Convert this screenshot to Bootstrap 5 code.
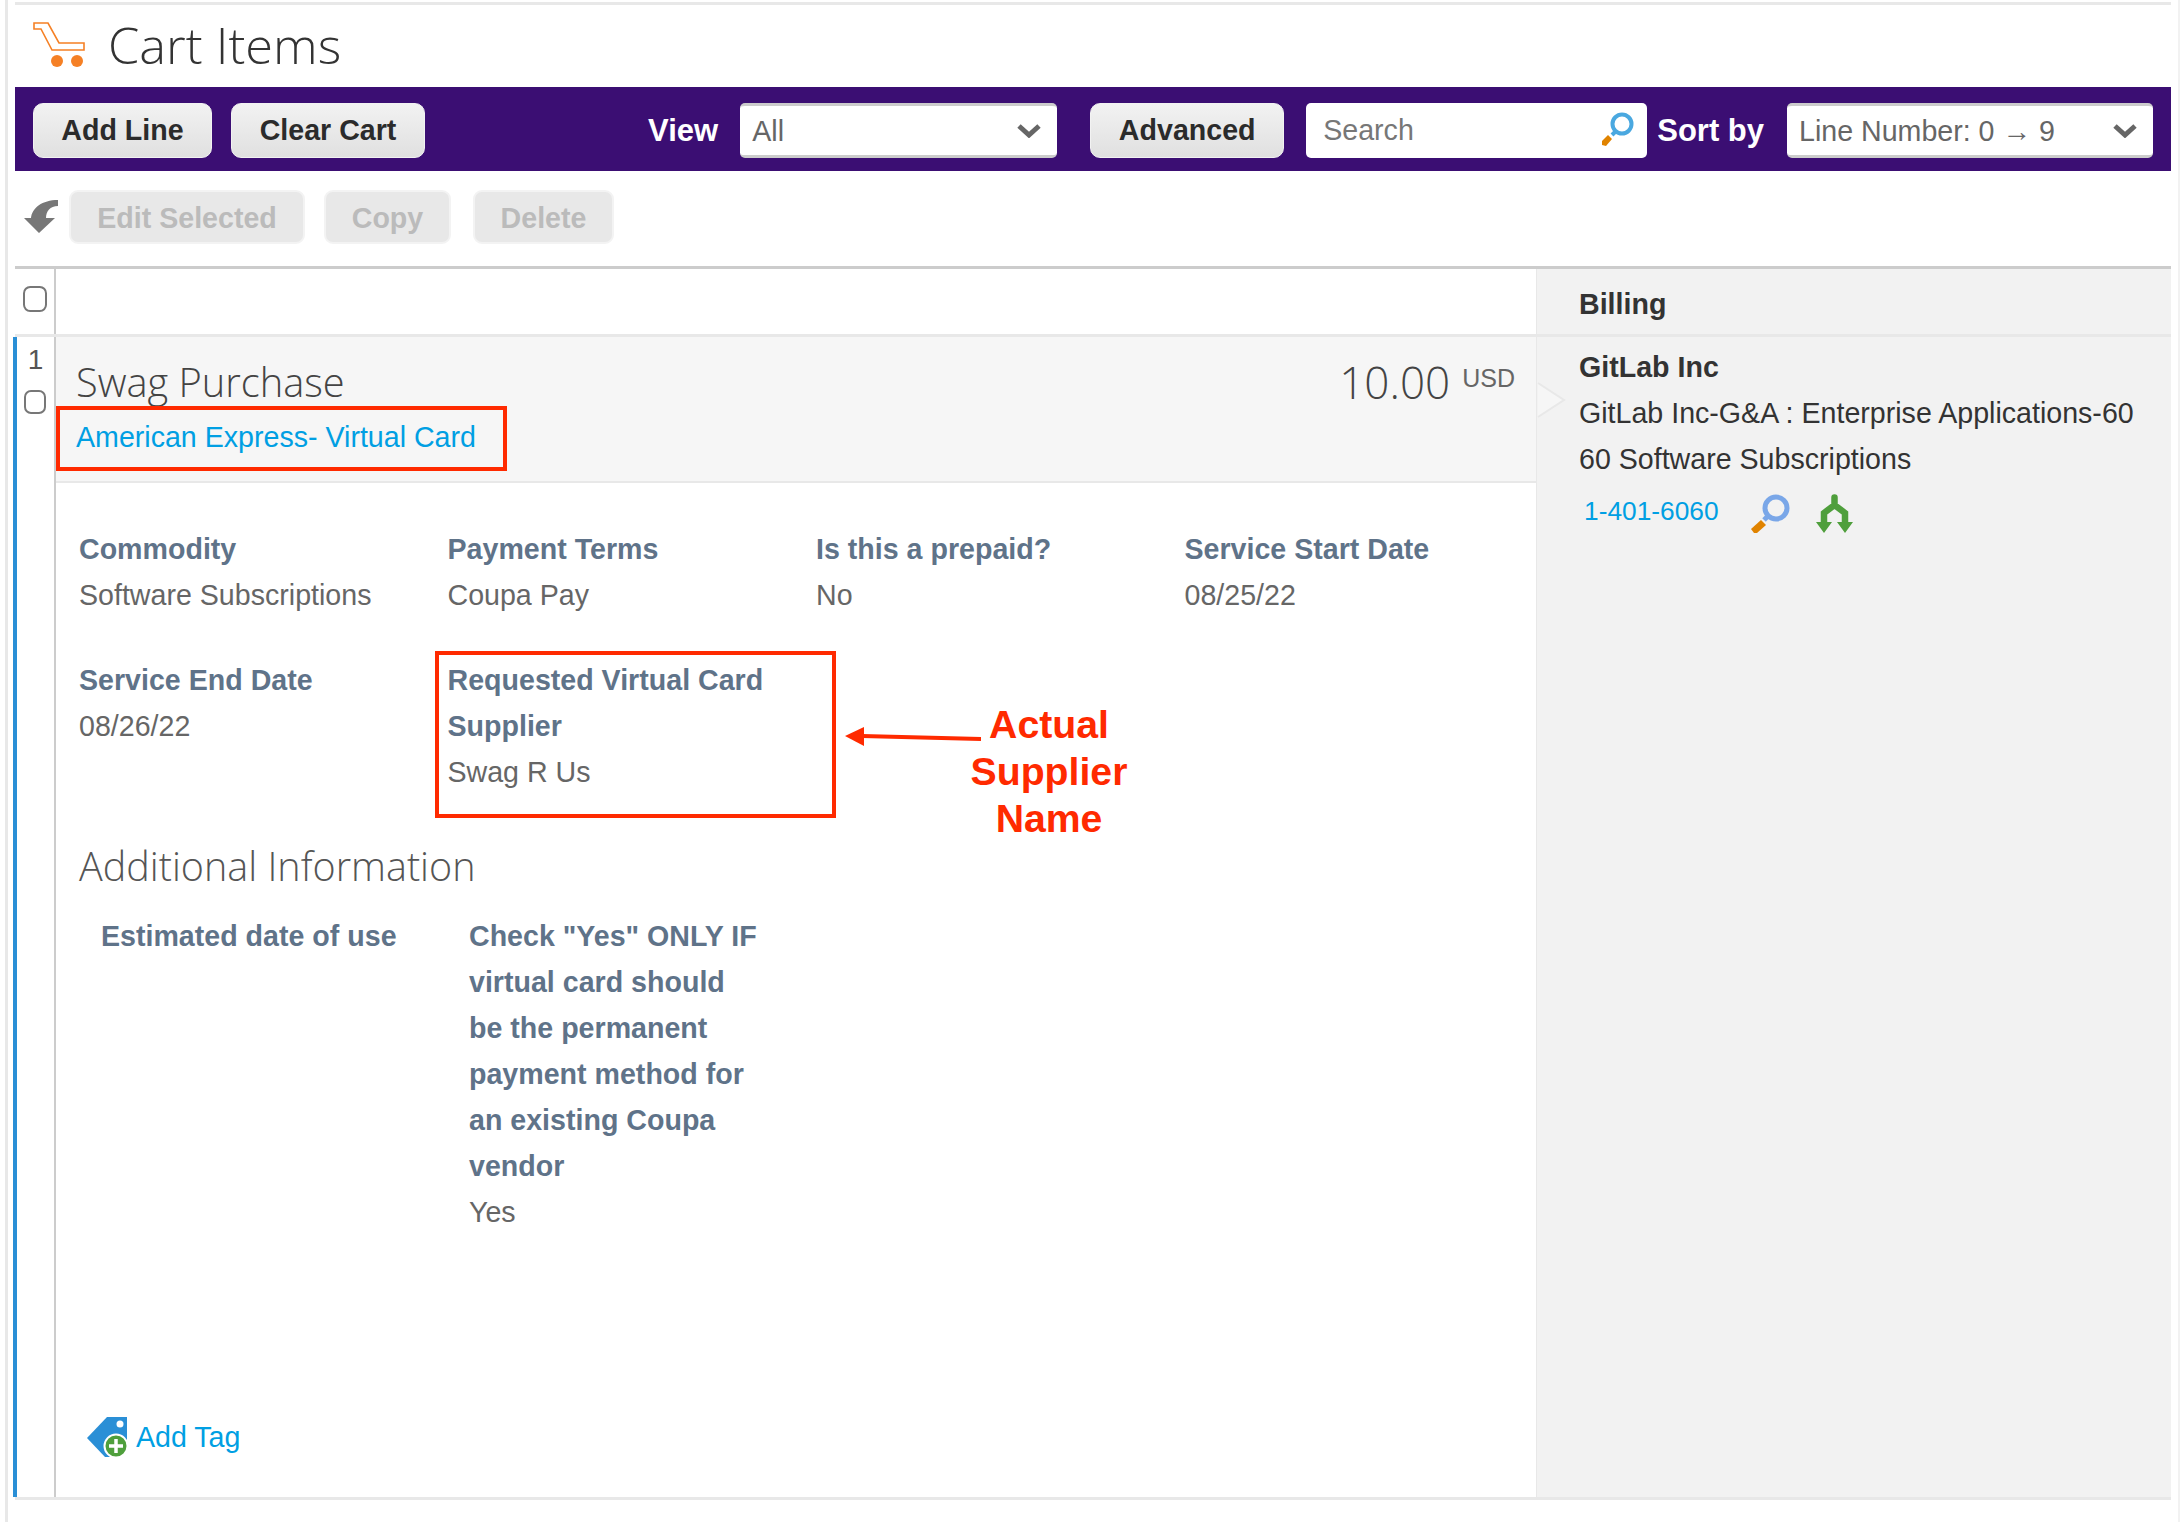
<!DOCTYPE html>
<html lang="en">
<head>
  <meta charset="UTF-8" />
  <meta name="viewport" content="width=device-width, initial-scale=1.0" />
  <title>Cart Items</title>
  <link href="https://cdn.jsdelivr.net/npm/bootstrap@5.3.0/dist/css/bootstrap.min.css" rel="stylesheet">
  <style>
    body {
      background: #fff;
      color: #666;
      font-family: "Liberation Sans", Arial, sans-serif;
      font-size: 28.6px;
      line-height: 46px;
    }
    .page-wrap {
      position: relative;
      width: 2175px;
      height: 1522px;
      margin-left: 5px;
      padding: 2px 7px 0 7px;
      border-left: 3px solid #e8e8e8;
      border-right: 2px solid #f2f2f2;
      overflow: hidden;
    }
    .top-rule { height: 3px; background: #e8e8e8; }
    .title-row { height: 82px; padding: 0 0 2px 18px; gap: 23px; }
    .title-row h1 {
      font-family: "Open Sans", sans-serif;
      font-weight: 300;
      font-size: 50.5px;
      line-height: 1;
      color: #333;
      margin: 0;
    }
    .tool-bar {
      height: 84px;
      background: #3b0e73;
      padding: 16px 18px 13px 18px;
    }
    .tool-btn {
      height: 55px;
      border: 1px solid #f2f2f2;
      border-radius: 10px;
      background: linear-gradient(#f2f2f2, #e0e0e0);
      color: #2b2b2b;
      font-weight: 700;
      font-size: 28.6px;
      line-height: 1;
      padding: 0;
    }
    .tool-btn:hover { background: linear-gradient(#f2f2f2, #e0e0e0); color: #2b2b2b; border-color: #f2f2f2; }
    .btn-add { width: 179px; }
    .btn-clear { width: 194px; margin-left: 19px; }
    .btn-advanced { width: 194px; margin-left: 33px; }
    .bar-label { color: #fff; font-weight: 700; font-size: 31px; line-height: 55px; white-space: nowrap; }
    .label-view { margin-right: 22px; }
    .label-sort { margin: 0 23px 0 10px; }
    .bar-select {
      height: 55px;
      border-radius: 5px;
      border: 0;
      border-top: 3px solid #ccc;
      border-bottom: 3px solid #ccc;
      padding: 2px 10px 0 12px;
      font-size: 28.6px;
      color: #666;
      background-size: 24px 14px;
      background-position: right 16px center;
      background-image: url("data:image/svg+xml,%3csvg xmlns='http://www.w3.org/2000/svg' viewBox='0 0 24 14'%3e%3cpath fill='none' stroke='%23666' stroke-width='5' d='M2 2l10 9 10-9'/%3e%3c/svg%3e");
    }
    .select-view { width: 317px; }
    .select-sort { width: 366px; }
    .search-box {
      width: 341px;
      height: 55px;
      margin-left: 22px;
      background: #fff;
      border-radius: 5px;
      padding: 0 12px 0 17px;
      color: #777;
      line-height: 55px;
    }
    .action-row { height: 95px; padding: 19px 0 0 9px; }
    .back-arrow { margin: 8px 9px 0 0; }
    .btn.dim-btn:disabled {
      height: 54px;
      background: #e8e8e8;
      border: 2px solid #f3f3f3;
      border-radius: 9px;
      color: #bbb;
      font-weight: 700;
      font-size: 28.6px;
      line-height: 1;
      padding: 2px 0 0;
      opacity: 1;
    }
    .btn-edit { width: 236px; }
    .btn-copy { width: 127px; margin-left: 19px; }
    .btn-delete { width: 141px; margin-left: 22px; }
    .cart-table { border-top: 3px solid #ccc; border-bottom: 3px solid #e8e8e8; height: 1234px; }
    .main-col { width: 1521px; flex: none; }
    .side-col { flex: 1; background: #f2f2f2; border-left: 1px solid #e8e8e8; position: relative; }
    .head-row { height: 68px; border-bottom: 3px solid #e8e8e8; }
    .head-check { width: 41px; border-right: 2px solid #ccc; padding: 17px 0 0 8px; height: 65px; }
    .check-box {
      width: 24px;
      height: 26px;
      margin: 0;
      border: 2px solid #777;
      border-radius: 5px;
      float: none;
    }
    .line-row { height: 1160px; border-left: 4px solid #2a8fd6; margin-left: -2px; }
    .line-num { width: 39px; flex: none; border-right: 2px solid #ccc; text-align: center; line-height: 36px; padding-top: 5px; color: #555; font-size: 28px; }
    .line-num .check-box { width: 22px; height: 24px; display: block; margin: 12px 0 0 7px; }
    .line-body { flex: 1; }
    .line-head { height: 146px; background: #f6f6f6; border-bottom: 2px solid #e8e8e8; padding: 17px 38px 0 20px; }
    .line-title { font-family: "Open Sans", sans-serif; font-weight: 300; font-size: 39.800px; line-height: 56px; color: #444; }
    .line-price { font-family: "Open Sans", sans-serif; font-weight: 300; font-size: 44px; line-height: 56px; color: #444; }
    .line-price span { font-family: "Liberation Sans", sans-serif; font-weight: 400; font-size: 25px; line-height: 1; color: #666; margin-left: 12px; vertical-align: 12px; }
    .blue-link { color: #009fe3; text-decoration: none; }
    .line-link { display: block; margin-top: 4px; }
    .field-grid { width: 1497px; margin: 0; padding: 43px 0 0 23px; }
    .field-grid > div { width: 368.500px; padding: 0; min-height: 131px; }
    .field-label { color: #5f7389; font-weight: 700; }
    .section-title { font-family: "Open Sans", sans-serif; font-weight: 300; font-size: 39.500px; line-height: 56px; color: #555; margin: 43px 0 0; padding-left: 23px; }
    .extra-grid { padding: 19px 0 0 45px; }
    .extra-grid > div { width: 368px; }
    .extra-grid > div + div { width: 293px; }
    .tag-row { position: absolute; left: 78px; top: 1414px; gap: 8px; }
    .side-head { height: 68px; border-bottom: 3px solid #e8e8e8; padding-left: 42px; line-height: 70px; font-weight: 700; color: #333; }
    .side-body { padding: 7px 0 0 42px; color: #333; }
    .side-arrow { position: absolute; left: 0; top: 113px; }
    .ref-row { padding: 6px 0 0 5px; }
    .ref-num { font-size: 26.300px; }
    .icon-zoom { margin: 5px 0 0 31px; }
    .icon-split { margin: 5px 0 0 26px; }
    .red-box { position: absolute; border: 4px solid #ff2a00; }
    .box-link { left: 48px; top: 406px; width: 451px; height: 65px; }
    .box-supplier { left: 427px; top: 651px; width: 401px; height: 167px; }
    .note-arrow { position: absolute; left: 836px; top: 723px; }
    .note-text { position: absolute; left: 941px; top: 701px; width: 200px; text-align: center; color: #ff2a00; font-weight: 700; font-size: 39.200px; line-height: 47px; }
  </style>
</head>
<body>

<div class="page-wrap">
  <div class="top-rule"></div>

  <div class="title-row d-flex align-items-center">
    <svg width="52" height="46" viewBox="0 0 52 46">
      <path d="M1 1h14l11 20h25v7H19L8 7H1z" fill="#fff" stroke="#f58025" stroke-width="1.6"/>
      <circle cx="24" cy="39" r="6" fill="#f58025"/>
      <circle cx="44" cy="39" r="6" fill="#f58025"/>
    </svg>
    <h1>Cart Items</h1>
  </div>

  <div class="tool-bar d-flex align-items-start">
    <button class="btn tool-btn btn-add">Add Line</button>
    <button class="btn tool-btn btn-clear">Clear Cart</button>
    <div class="bar-label label-view ms-auto">View</div>
    <select class="form-select bar-select select-view"><option>All</option></select>
    <button class="btn tool-btn btn-advanced">Advanced</button>
    <div class="search-box d-flex justify-content-between">
      <span>Search</span>
      <svg width="36" height="38" viewBox="0 0 36 38" class="mt-2">
        <circle cx="23" cy="13" r="9.500" fill="none" stroke="#4aa8e0" stroke-width="4"/>
        <path d="M16 21l-3 3" stroke="#4aa8e0" stroke-width="4"/>
        <path d="M3 30l6-6 4 4-6 7-4-1z" fill="#e08300"/>
      </svg>
    </div>
    <div class="bar-label label-sort">Sort by</div>
    <select class="form-select bar-select select-sort"><option>Line Number: 0 → 9</option></select>
  </div>

  <div class="action-row d-flex align-items-start">
    <svg class="back-arrow" width="36" height="38" viewBox="0 0 36 38">
      <path d="M7 20C8 10 18 2 34 2V8C26 8 22 13 22 20H31L15 35 0 20z" fill="#777"/>
    </svg>
    <button class="btn dim-btn btn-edit" disabled>Edit Selected</button>
    <button class="btn dim-btn btn-copy" disabled>Copy</button>
    <button class="btn dim-btn btn-delete" disabled>Delete</button>
  </div>

  <div class="cart-table d-flex">
    <div class="main-col">
      <div class="head-row">
        <div class="head-check"><input class="form-check-input check-box" type="checkbox"></div>
      </div>
      <div class="line-row d-flex">
        <div class="line-num">
          1
          <input class="form-check-input check-box" type="checkbox">
        </div>
        <div class="line-body">
          <div class="line-head">
            <div class="d-flex justify-content-between">
              <div class="line-title">Swag Purchase</div>
              <div class="line-price">10.00<span>USD</span></div>
            </div>
            <a href="#" class="blue-link line-link">American Express- Virtual Card</a>
          </div>

          <div class="row row-cols-4 field-grid">
            <div>
              <div class="field-label">Commodity</div>
              <div>Software Subscriptions</div>
            </div>
            <div>
              <div class="field-label">Payment Terms</div>
              <div>Coupa Pay</div>
            </div>
            <div>
              <div class="field-label">Is this a prepaid?</div>
              <div>No</div>
            </div>
            <div>
              <div class="field-label">Service Start Date</div>
              <div>08/25/22</div>
            </div>
            <div>
              <div class="field-label">Service End Date</div>
              <div>08/26/22</div>
            </div>
            <div>
              <div class="field-label">Requested Virtual Card Supplier</div>
              <div>Swag R Us</div>
            </div>
          </div>

          <h2 class="section-title">Additional Information</h2>
          <div class="extra-grid d-flex">
            <div class="field-label">Estimated date of use</div>
            <div>
              <div class="field-label">Check "Yes" ONLY IF virtual card should be the permanent payment method for an existing Coupa vendor</div>
              <div>Yes</div>
            </div>
          </div>
        </div>
      </div>
    </div>

    <div class="side-col">
      <div class="side-head">Billing</div>
      <svg class="side-arrow" width="30" height="36" viewBox="0 0 30 36"><path d="M1 1l26 17L1 35" fill="#f6f6f6" stroke="#e8e8e8" stroke-width="2"/></svg>
      <div class="side-body">
        <div class="fw-bold">GitLab Inc</div>
        <div>GitLab Inc-G&amp;A : Enterprise Applications-60<br>60 Software Subscriptions</div>
        <div class="ref-row d-flex align-items-center">
          <a href="#" class="blue-link ref-num">1-401-6060</a>
          <svg class="icon-zoom" width="40" height="40" viewBox="0 0 40 40">
            <circle cx="26" cy="14" r="11" fill="none" stroke="#7aa7e8" stroke-width="5"/>
            <path d="M18 22l-4 4" stroke="#7aa7e8" stroke-width="5"/>
            <path d="M1 35l10-9 5 5-9 8H4z" fill="#e08300"/>
          </svg>
          <svg class="icon-split" width="38" height="40" viewBox="0 0 38 40">
            <path d="M18.500 3.500V11L8 19v9M18.500 11L29 19v9" fill="none" stroke="#4f9f3c" stroke-width="6.500" stroke-linecap="round"/>
            <path d="M0 28h16L8 39zM21 28h16l-8 11z" fill="#4f9f3c"/>
          </svg>
        </div>
      </div>
    </div>
  </div>

  <a href="#" class="blue-link tag-row d-flex align-items-center">
    <svg width="42" height="42" viewBox="0 0 42 42">
      <path d="M21 1h20v24L25 41h-6L1 22z" fill="#2a8fd6"/>
      <circle cx="34" cy="8" r="3.500" fill="#fff"/>
      <circle cx="30" cy="30" r="11.500" fill="#4f9f3c" stroke="#fff" stroke-width="2"/>
      <path d="M30 23v14M23 30h14" stroke="#fff" stroke-width="3.500"/>
    </svg>
    Add Tag
  </a>

  <!-- annotations drawn over the screenshot -->
  <div class="red-box box-link"></div>
  <div class="red-box box-supplier"></div>
  <svg class="note-arrow" width="137" height="26" viewBox="0 0 137 26">
    <path d="M18 13l119 3" stroke="#ff2a00" stroke-width="4"/>
    <path d="M1 13L20 4v19z" fill="#ff2a00"/>
  </svg>
  <div class="note-text">Actual<br>Supplier<br>Name</div>
</div>

<script src="https://cdn.jsdelivr.net/npm/bootstrap@5.3.0/dist/js/bootstrap.bundle.min.js"></script>
</body>
</html>
